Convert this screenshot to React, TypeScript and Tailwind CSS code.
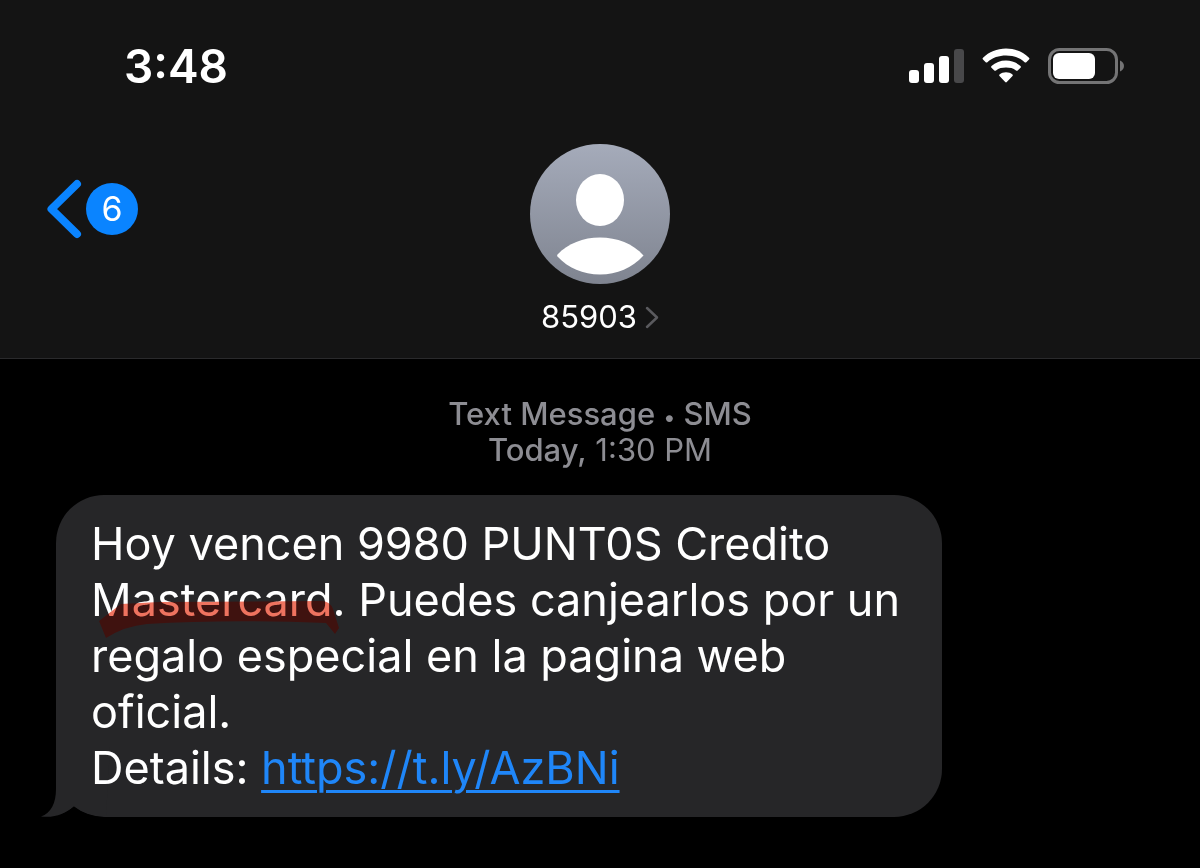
function SignalIcon() {
  return (
    <svg width="55" height="36" viewBox="0 0 55 36" role="img" aria-label="Signal strength">
      <rect x="0" y="22" width="10" height="13" rx="3" fill="#fff" />
      <rect x="15" y="15" width="10" height="20" rx="3" fill="#fff" />
      <rect x="30" y="8" width="10" height="27" rx="3" fill="#fff" />
      <rect x="45" y="1" width="10" height="34" rx="3" fill="#48484a" />
    </svg>
  );
}

function WifiIcon() {
  return (
    <svg width="48" height="36" viewBox="0 0 48 36" fill="#fff" role="img" aria-label="Wi-Fi">
      <path d="M24 .5C15 .5 7 4 1 9.700Q.1 10.600 1 11.500L3.700 14.200Q4.500 15 5.400 14.200C10.500 9.500 17 7.500 24 7.500S37.500 9.500 42.600 14.200Q43.500 15 44.300 14.200L47 11.500Q47.900 10.600 47 9.700C41 4 33 .5 24 .5Z" />
      <path d="M24 12.500C18.400 12.500 13.400 14.500 9.500 18Q8.700 18.900 9.500 19.700L12.300 22.500Q13.100 23.200 14 22.500C16.700 20.100 20.200 19.500 24 19.500S31.300 20.100 34 22.500Q34.900 23.200 35.700 22.500L38.500 19.700Q39.300 18.900 38.500 18C34.600 14.500 29.600 12.500 24 12.500Z" />
      <path d="M24 24.300C21.500 24.300 19.300 25.100 17.500 26.500Q16.700 27.300 17.500 28.100L23.200 34.100Q24 34.900 24.800 34.100L30.500 28.100Q31.300 27.300 30.500 26.500C28.700 25.100 26.500 24.300 24 24.300Z" />
    </svg>
  );
}

function BatteryIcon() {
  return (
    <svg width="78" height="36" viewBox="0 0 78 36" role="img" aria-label="Battery">
      <rect x="1.500" y="1.500" width="67" height="33" rx="10" fill="none" stroke="#747475" strokeWidth="3" />
      <rect x="5" y="5" width="42" height="26" rx="6" fill="#fff" />
      <path d="M72 12.500C74.500 13.500 76 15.500 76 18S74.500 22.500 72 23.500Z" fill="#747475" />
    </svg>
  );
}

function Avatar() {
  return (
    <svg width="140" height="140" viewBox="0 0 140 140" aria-hidden="true">
      <defs>
        <linearGradient id="avatar" x1="0" y1="0" x2="0" y2="1">
          <stop offset="0" stopColor="#a5abba" />
          <stop offset="1" stopColor="#7f8490" />
        </linearGradient>
      </defs>
      <circle cx="70" cy="70" r="70" fill="url(#avatar)" />
      <ellipse cx="70" cy="56" rx="24" ry="26" fill="#fff" />
      <path
        d="M27.500 110.500C38 99.500 53 93.500 70 93.500S103 99.500 113.500 111.500C102 124 87 130.500 70 130.500S38 124 27.500 112.500Q26.800 111.500 27.500 110.500Z"
        fill="#fff"
      />
    </svg>
  );
}

function MarkerStroke() {
  const shape = "M0 22L22 5L60 3L222 2Q231 2 234 10L240 29L236 35L227 24Q130 20 48 25Q26 27 7 39Z";
  return (
    <svg
      className="pointer-events-none absolute left-2 top-[83px] h-10 w-60 overflow-visible"
      viewBox="0 0 240 40"
      aria-hidden="true"
    >
      <path className="mix-blend-multiply" d={shape} fill="#eb735f" />
      <path className="mix-blend-screen" d={shape} fill="#200000" />
    </svg>
  );
}

function Header() {
  return (
    <header className="border-b border-[#2a2a2c] bg-[#141414] pb-[21px]">
      <div className="flex items-center justify-between pl-31 pr-[74px] pt-9">
        <time className="text-[46px] font-semibold leading-15">3:48</time>
        <div className="flex items-center gap-[18px]">
          <SignalIcon />
          <WifiIcon />
          <BatteryIcon />
        </div>
      </div>
      <div className="grid grid-cols-[1fr_auto_1fr] items-start pt-12">
        <button type="button" aria-label="Back, 6 unread" className="ml-11 mt-[35px] flex items-center gap-1 justify-self-start">
          <svg width="38" height="60" viewBox="0 0 38 60" fill="none" aria-hidden="true">
            <path d="M33 5L7.500 30L33 55" stroke="#0a84ff" strokeWidth="8" strokeLinecap="round" strokeLinejoin="round" />
          </svg>
          <span className="flex size-13 items-center justify-center rounded-full bg-[#0a84ff] text-[34px] leading-none">6</span>
        </button>
        <button type="button" className="flex flex-col items-center">
          <Avatar />
          <span className="mt-[13px] flex items-center gap-2 text-[31px] leading-10">
            85903
            <svg width="14" height="24" viewBox="0 0 14 24" fill="none" aria-hidden="true">
              <path d="M2 3L12 12.500L2 22" stroke="#5a5a5e" strokeWidth="2.500" strokeLinecap="round" strokeLinejoin="round" />
            </svg>
          </span>
        </button>
      </div>
    </header>
  );
}

function Bubble() {
  return (
    <div className="relative ml-14 w-fit max-w-[886px] rounded-[48px] bg-[#262628] pb-[21px] pl-[35px] pr-10 pt-[21px]">
      <svg className="absolute -left-4 bottom-0" width="70" height="70" viewBox="0 0 70 70" aria-hidden="true">
        <path d="M16 0V42C16 56 11 66 1 69.500C15 71 25 67 34 59.500C42 65.500 52 70 66 70L70 0Z" fill="#262628" />
        <path d="M16 70Q26 66.500 34 59.500Q46 69 64 70Z" fill="#000" />
      </svg>
      <p className="relative text-[45px] leading-14">
        Hoy vencen 9980 PUNT0S Credito Mastercard. Puedes canjearlos por un regalo especial en la pagina web oficial.
        <br />
        Details:{" "}
        <a href="https://t.ly/AzBNi" className="text-[#1f86f8] underline decoration-3 underline-offset-6">
          https://t.ly/AzBNi
        </a>
        <MarkerStroke />
      </p>
    </div>
  );
}

export default function App() {
  return (
    <div className="min-h-screen bg-black font-['Inter','Liberation_Sans',sans-serif] text-white">
      <Header />
      <main className="pb-12 pt-[37px]">
        <p className="mb-[27px] text-center text-[31px] leading-9 text-[#8d8d93]">
          <span className="font-medium">
            Text Message <span className="align-middle text-[22px] leading-none">•</span> SMS
          </span>
          <br />
          <span className="font-medium">Today,</span> 1:30 PM
        </p>
        <Bubble />
      </main>
    </div>
  );
}
